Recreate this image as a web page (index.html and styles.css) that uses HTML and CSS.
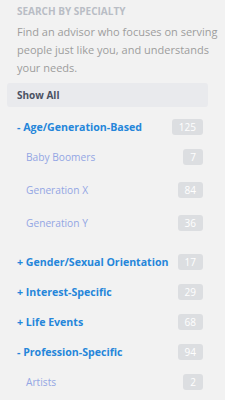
FILE: index.html
```html
<!DOCTYPE html>
<html>
<head>
<meta charset="utf-8">
<link rel="stylesheet" href="styles.css">
</head>
<body>
<div class="panel">
  <h3 class="title">SEARCH BY SPECIALTY</h3>
  <p class="desc">Find an advisor who focuses on serving people just like you, and understands your needs.</p>
  <div class="show-all">Show All</div>
  <ul class="cats">
    <li class="cat open">
      <div class="cat-row"><span class="cat-name">- Age/Generation-Based</span><span class="badge">125</span></div>
      <ul class="subs">
        <li class="sub-row"><span class="sub-name">Baby Boomers</span><span class="badge">7</span></li>
        <li class="sub-row"><span class="sub-name">Generation X</span><span class="badge">84</span></li>
        <li class="sub-row"><span class="sub-name">Generation Y</span><span class="badge">36</span></li>
      </ul>
    </li>
    <li class="cat">
      <div class="cat-row"><span class="cat-name">+ Gender/Sexual Orientation</span><span class="badge">17</span></div>
    </li>
    <li class="cat">
      <div class="cat-row"><span class="cat-name">+ Interest-Specific</span><span class="badge">29</span></div>
    </li>
    <li class="cat">
      <div class="cat-row"><span class="cat-name">+ Life Events</span><span class="badge">68</span></div>
    </li>
    <li class="cat open">
      <div class="cat-row"><span class="cat-name">- Profession-Specific</span><span class="badge">94</span></div>
      <ul class="subs">
        <li class="sub-row"><span class="sub-name">Artists</span><span class="badge">2</span></li>
      </ul>
    </li>
  </ul>
</div>
</body>
</html>
```

FILE: styles.css
```css
html, body {
  margin: 0;
  padding: 0;
  background: #f2f2f2;
}
body {
  font-family: "Open Sans", "Liberation Sans", sans-serif;
  width: 225px;
  height: 400px;
  overflow: hidden;
}
.panel {
  padding: 3px 17px 0 7px;
}
.title {
  margin: 0 0 0 10px;
  font-size: 10px;
  font-weight: 700;
  line-height: 16px;
  color: #b9bdc5;
}
.desc {
  margin: 4px -14px 0 10px;
  font-size: 11px;
  line-height: 18px;
  color: #9d9d9d;
}
.show-all {
  margin-top: 6px;
  height: 24px;
  line-height: 24px;
  padding-left: 10px;
  background: #e9eaed;
  border-radius: 3px;
  font-size: 10px;
  font-weight: 700;
  color: #4b5263;
}
.cats, .subs {
  list-style: none;
  margin: 0;
  padding: 0;
}
.cats {
  margin-top: 5px;
  margin-right: 5px;
}
.cat-row, .sub-row {
  display: flex;
  align-items: center;
  justify-content: space-between;
}
.cat-row {
  height: 30px;
  padding-left: 10px;
}
.cat-name {
  font-size: 10.6px;
  font-weight: 700;
  color: #2586da;
}
.subs {
  margin-top: -2px;
  padding-bottom: 8px;
}
.sub-row {
  height: 33px;
  padding-left: 19px;
}
.sub-name {
  font-size: 10.2px;
  color: #93a6e4;
}
.badge {
  height: 16px;
  line-height: 16px;
  padding: 0 7px;
  border-radius: 3px;
  background: #dcdee1;
  color: #ffffff;
  font-size: 10px;
}
```
